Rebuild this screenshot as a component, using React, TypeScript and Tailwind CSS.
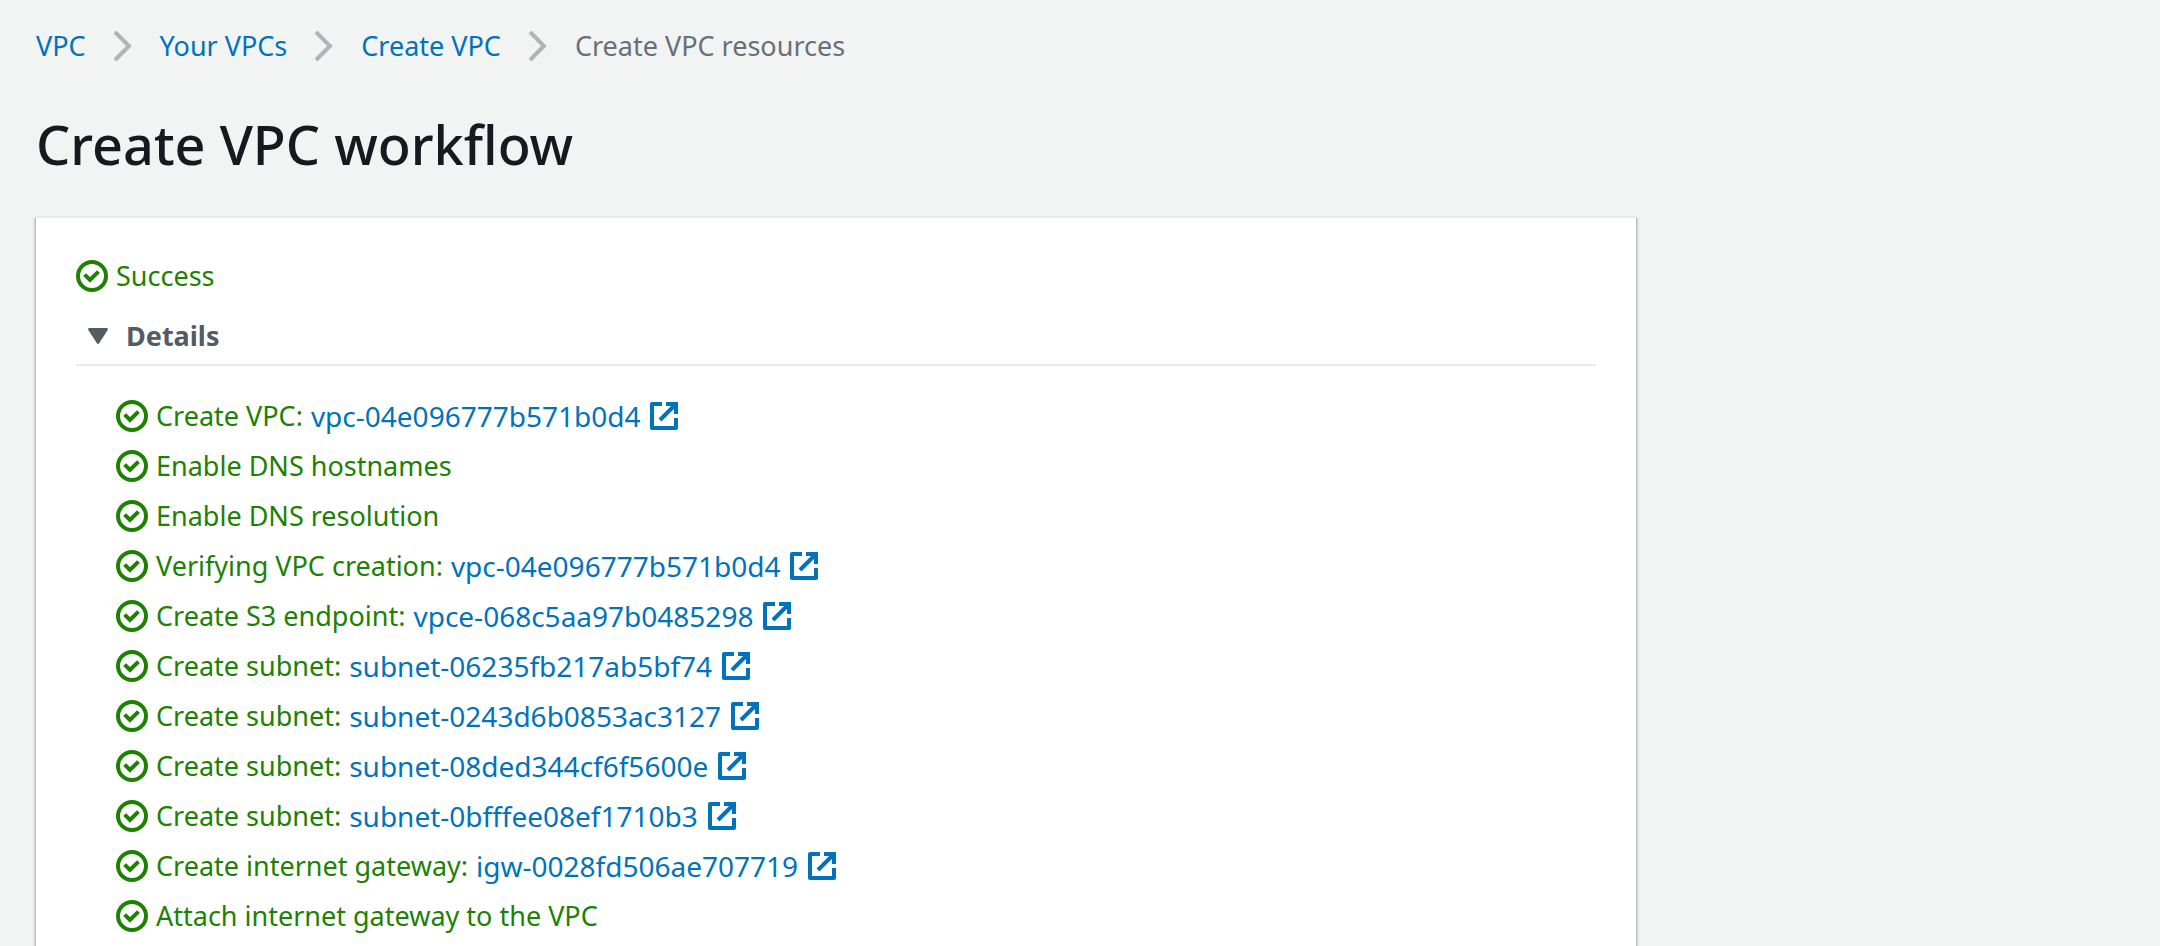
import { useState } from "react";

type Step = { label: string; resource?: string };

const crumbs = ["VPC", "Your VPCs", "Create VPC"];

const steps: Step[] = [
  { label: "Create VPC:", resource: "vpc-04e096777b571b0d4" },
  { label: "Enable DNS hostnames" },
  { label: "Enable DNS resolution" },
  { label: "Verifying VPC creation:", resource: "vpc-04e096777b571b0d4" },
  { label: "Create S3 endpoint:", resource: "vpce-068c5aa97b0485298" },
  { label: "Create subnet:", resource: "subnet-06235fb217ab5bf74" },
  { label: "Create subnet:", resource: "subnet-0243d6b0853ac3127" },
  { label: "Create subnet:", resource: "subnet-08ded344cf6f5600e" },
  { label: "Create subnet:", resource: "subnet-0bfffee08ef1710b3" },
  { label: "Create internet gateway:", resource: "igw-0028fd506ae707719" },
  { label: "Attach internet gateway to the VPC" },
];

function CheckIcon() {
  return (
    <svg viewBox="0 0 16 16" className="size-8 shrink-0" fill="none" stroke="currentColor" strokeWidth="2" aria-hidden="true">
      <circle cx="8" cy="8" r="7" />
      <path strokeLinecap="square" d="m5 8 2 2 3.521-3.521" />
    </svg>
  );
}

function ExternalIcon() {
  return (
    <svg viewBox="0 0 16 16" className="size-8 shrink-0" fill="none" stroke="currentColor" strokeWidth="2" aria-hidden="true">
      <path strokeLinecap="square" d="M10 2h4v4" />
      <path d="m6 10 8-8" />
      <path strokeLinejoin="round" d="M14 9.048V14H2V2h5" />
    </svg>
  );
}

function Chevron() {
  return (
    <svg viewBox="0 0 20 32" className="mx-[27px] h-8 w-5 shrink-0 text-[#aab7b8]" fill="none" stroke="currentColor" strokeWidth="4" aria-hidden="true">
      <path d="M2 2l14 14L2 30" />
    </svg>
  );
}

function Caret({ open }: { open: boolean }) {
  return (
    <svg viewBox="0 0 20 16" className={open ? "h-4 w-5" : "h-4 w-5 -rotate-90"} aria-hidden="true">
      <path
        fill="currentColor"
        d="M1.3 0h17.4a1.2 1.2 0 0 1 1 1.9l-8.6 13.4a1.3 1.3 0 0 1-2.2 0L.3 1.9A1.2 1.2 0 0 1 1.3 0Z"
      />
    </svg>
  );
}

export default function App() {
  const [open, setOpen] = useState(true);

  return (
    <div className="flex min-h-screen flex-col overflow-hidden bg-[#f2f3f3] px-9 pt-[26px] font-['Noto_Sans',sans-serif] text-[27px] text-[#16191f]">
      <nav aria-label="Breadcrumb">
        <ol className="flex h-10 items-center">
          {crumbs.map((name) => (
            <li key={name} className="flex items-center">
              <a href="#" className="text-[#0073bb] hover:underline">
                {name}
              </a>
              <Chevron />
            </li>
          ))}
          <li aria-current="page" className="text-[#687078]">
            Create VPC resources
          </li>
        </ol>
      </nav>

      <h1 className="mt-[42px] text-[54px] leading-[72px] font-medium">Create VPC workflow</h1>

      <main className="mt-9 w-full max-w-[1600px] grow border-t-2 border-[#ebebeb] bg-white px-10 pt-[33px] shadow-[0_2px_2px_rgba(0,28,36,0.3),2px_2px_2px_rgba(0,28,36,0.15),-2px_2px_2px_rgba(0,28,36,0.15)]">
        <p className="flex h-[50px] items-center gap-2 text-[#1d8102]">
          <CheckIcon />
          Success
        </p>

        <section>
          <h2 className="mt-[7px] border-b-2 border-[#ebebeb]">
            <button
              type="button"
              aria-expanded={open}
              onClick={() => setOpen(!open)}
              className="flex h-14 w-full items-center gap-[18px] pl-3 font-bold text-[#545b64]"
            >
              <Caret open={open} />
              Details
            </button>
          </h2>

          {open && (
            <ul className="pt-[25px] pl-10">
              {steps.map(({ label, resource }, i) => (
                <li key={i} className="flex h-[50px] items-center gap-2 text-[#1d8102]">
                  <CheckIcon />
                  <span>{label}</span>
                  {resource && (
                    <a href="#" className="flex items-center gap-2 text-[28px] text-[#0073bb] hover:underline">
                      {resource}
                      <ExternalIcon />
                    </a>
                  )}
                </li>
              ))}
            </ul>
          )}
        </section>
      </main>
    </div>
  );
}
